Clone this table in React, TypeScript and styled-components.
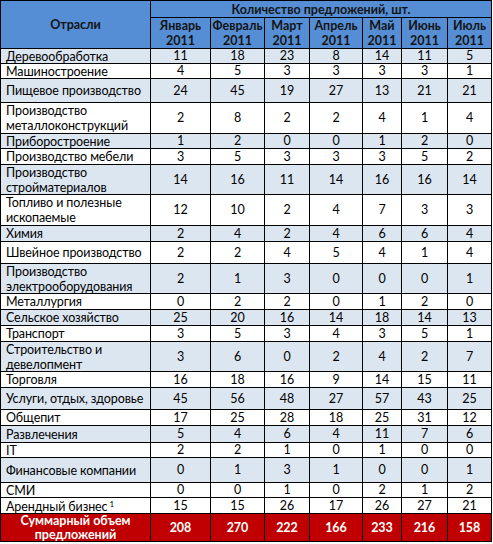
import React from "react";
import styled, { createGlobalStyle, css } from "styled-components";

const GlobalStyle = createGlobalStyle`
  html, body {
    margin: 0;
    padding: 0;
    background: #ffffff;
  }
  body {
    font-family: Lato, "Noto Sans", "DejaVu Sans", sans-serif;
    -webkit-font-smoothing: antialiased;
  }
`;

const colWidths = [149, 59, 53, 44, 52, 38, 45, 43];
const rowHeights = [
  16, 30, 14, 14, 23, 30, 14, 15, 29, 30, 15, 21, 29, 15, 15, 15, 29, 15, 21,
  15, 16, 14, 24, 14, 15, 27,
];

const Grid = styled.div`
  display: grid;
  grid-template-columns: ${colWidths.map((w) => `${w}px`).join(" ")};
  grid-template-rows: ${rowHeights.map((h) => `${h}px`).join(" ")};
  gap: 1px;
  padding: 1px;
  background: #000000;
  width: max-content;
  font-size: 12.5px;
  color: #000000;
`;

const Cell = styled.div`
  display: flex;
  flex-direction: column;
  align-items: center;
  justify-content: center;
  text-align: center;
  overflow: visible;
  white-space: nowrap;
  line-height: 14px;
  min-height: 0;
`;

const HeaderCell = styled(Cell)<{ $rowSpan?: number; $colSpan?: number }>`
  background: #558ed5;
  color: #141414;
  font-weight: 700;
  line-height: 15px;
  ${(p) => p.$rowSpan && css`grid-row: span ${p.$rowSpan};`}
  ${(p) => p.$colSpan && css`grid-column: span ${p.$colSpan};`}
`;

const NameCell = styled(Cell)<{ $striped: boolean }>`
  background: ${(p) => (p.$striped ? "#dce6f1" : "#ffffff")};
  align-items: flex-start;
  text-align: left;
  padding-left: 5px;
  line-height: 15px;
  letter-spacing: -0.1px;
`;

const NumCell = styled(Cell)<{ $striped: boolean }>`
  background: ${(p) => (p.$striped ? "#dce6f1" : "#ffffff")};
`;

const TotalCell = styled(Cell)`
  background: #c00000;
  color: #ffffff;
  font-weight: 700;
  line-height: 13.5px;
`;

const Line = styled.span`
  display: block;
`;

const Typo = styled.span`
  text-decoration: underline wavy #e02020;
  text-decoration-thickness: 1px;
  text-underline-offset: 2px;
`;

const Sup = styled.span`
  font-size: 8px;
  vertical-align: 4px;
  margin-left: 2px;
`;

type Row = { lines: React.ReactNode[]; values: number[]; striped: boolean };

const months = ["Январь", "Февраль", "Март", "Апрель", "Май", "Июнь", "Июль"];

const rows: Row[] = [
  { lines: ["Деревообработка"], values: [11, 18, 23, 8, 14, 11, 5], striped: true },
  { lines: ["Машиностроение"], values: [4, 5, 3, 3, 3, 3, 1], striped: false },
  { lines: ["Пищевое производство"], values: [24, 45, 19, 27, 13, 21, 21], striped: true },
  { lines: ["Производство", "металлоконструкций"], values: [2, 8, 2, 2, 4, 1, 4], striped: false },
  { lines: ["Приборостроение"], values: [1, 2, 0, 0, 1, 2, 0], striped: true },
  { lines: ["Производство мебели"], values: [3, 5, 3, 3, 3, 5, 2], striped: false },
  { lines: ["Производство", "стройматериалов"], values: [14, 16, 11, 14, 16, 16, 14], striped: true },
  { lines: ["Топливо и полезные", "ископаемые"], values: [12, 10, 2, 4, 7, 3, 3], striped: false },
  { lines: ["Химия"], values: [2, 4, 2, 4, 6, 6, 4], striped: true },
  { lines: ["Швейное производство"], values: [2, 2, 4, 5, 4, 1, 4], striped: false },
  { lines: ["Производство", "электрооборудования"], values: [2, 1, 3, 0, 0, 0, 1], striped: true },
  { lines: ["Металлургия"], values: [0, 2, 2, 0, 1, 2, 0], striped: false },
  { lines: ["Сельское хозяйство"], values: [25, 20, 16, 14, 18, 14, 13], striped: true },
  { lines: ["Транспорт"], values: [3, 5, 3, 4, 3, 5, 1], striped: false },
  { lines: ["Строительство и", <Typo key="t">девелопмент</Typo>], values: [3, 6, 0, 2, 4, 2, 7], striped: true },
  { lines: ["Торговля"], values: [16, 18, 16, 9, 14, 15, 11], striped: false },
  { lines: ["Услуги, отдых, здоровье"], values: [45, 56, 48, 27, 57, 43, 25], striped: true },
  { lines: ["Общепит"], values: [17, 25, 28, 18, 25, 31, 12], striped: false },
  { lines: ["Развлечения"], values: [5, 4, 6, 4, 11, 7, 6], striped: true },
  { lines: ["IT"], values: [2, 2, 1, 0, 1, 0, 0], striped: false },
  { lines: ["Финансовые компании"], values: [0, 1, 3, 1, 0, 0, 1], striped: true },
  { lines: ["СМИ"], values: [0, 0, 1, 0, 2, 1, 2], striped: false },
  {
    lines: [
      <span key="a">
        Арендный бизнес<Sup>1</Sup>
      </span>,
    ],
    values: [15, 15, 26, 17, 26, 27, 21],
    striped: false,
  },
];

const totals = [208, 270, 222, 166, 233, 216, 158];

export default function App() {
  return (
    <>
      <GlobalStyle />
      <Grid>
        <HeaderCell $rowSpan={2}>Отрасли</HeaderCell>
        <HeaderCell $colSpan={7}>Количество предложений, шт.</HeaderCell>
        {months.map((m) => (
          <HeaderCell key={m}>
            <Line>{m}</Line>
            <Line>2011</Line>
          </HeaderCell>
        ))}
        {rows.map((r, i) => (
          <React.Fragment key={i}>
            <NameCell $striped={r.striped}>
              {r.lines.map((l, j) => (
                <Line key={j}>{l}</Line>
              ))}
            </NameCell>
            {r.values.map((v, j) => (
              <NumCell key={j} $striped={r.striped}>
                {v}
              </NumCell>
            ))}
          </React.Fragment>
        ))}
        <TotalCell>
          <Line>Суммарный объем</Line>
          <Line>предложений</Line>
        </TotalCell>
        {totals.map((t, j) => (
          <TotalCell key={j}>{t}</TotalCell>
        ))}
      </Grid>
    </>
  );
}
